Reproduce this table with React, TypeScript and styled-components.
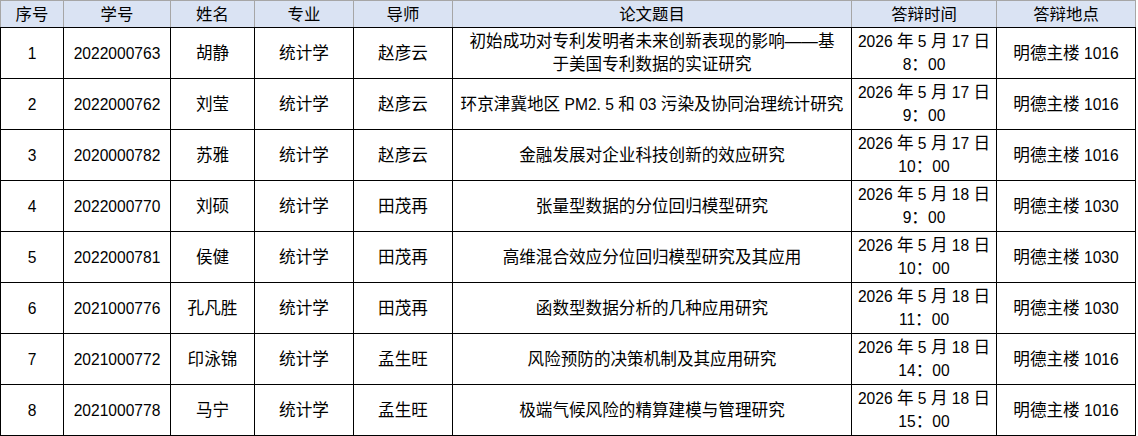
import React from 'react';
import styled, { createGlobalStyle } from 'styled-components';

const GlobalStyle = createGlobalStyle`
  html, body {
    margin: 0;
    padding: 0;
    background: #fff;
  }
  body {
    font-family: "Liberation Sans", "Noto Sans CJK SC", sans-serif;
  }
`;

type Row = {
  id: number;
  studentNo: string;
  name: string;
  major: string;
  tutor: string;
  title: string;
  date: string;
  time: string;
  place: string;
};

const rows: Row[] = [
  {
    id: 1,
    studentNo: '2022000763',
    name: '胡静',
    major: '统计学',
    tutor: '赵彦云',
    title: '初始成功对专利发明者未来创新表现的影响——基\n于美国专利数据的实证研究',
    date: '2026 年 5 月 17 日',
    time: '8：00',
    place: '明德主楼 1016',
  },
  {
    id: 2,
    studentNo: '2022000762',
    name: '刘莹',
    major: '统计学',
    tutor: '赵彦云',
    title: '环京津冀地区 PM2. 5 和 03 污染及协同治理统计研究',
    date: '2026 年 5 月 17 日',
    time: '9：00',
    place: '明德主楼 1016',
  },
  {
    id: 3,
    studentNo: '2020000782',
    name: '苏雅',
    major: '统计学',
    tutor: '赵彦云',
    title: '金融发展对企业科技创新的效应研究',
    date: '2026 年 5 月 17 日',
    time: '10：00',
    place: '明德主楼 1016',
  },
  {
    id: 4,
    studentNo: '2022000770',
    name: '刘硕',
    major: '统计学',
    tutor: '田茂再',
    title: '张量型数据的分位回归模型研究',
    date: '2026 年 5 月 18 日',
    time: '9：00',
    place: '明德主楼 1030',
  },
  {
    id: 5,
    studentNo: '2022000781',
    name: '侯健',
    major: '统计学',
    tutor: '田茂再',
    title: '高维混合效应分位回归模型研究及其应用',
    date: '2026 年 5 月 18 日',
    time: '10：00',
    place: '明德主楼 1030',
  },
  {
    id: 6,
    studentNo: '2021000776',
    name: '孔凡胜',
    major: '统计学',
    tutor: '田茂再',
    title: '函数型数据分析的几种应用研究',
    date: '2026 年 5 月 18 日',
    time: '11：00',
    place: '明德主楼 1030',
  },
  {
    id: 7,
    studentNo: '2021000772',
    name: '印泳锦',
    major: '统计学',
    tutor: '孟生旺',
    title: '风险预防的决策机制及其应用研究',
    date: '2026 年 5 月 18 日',
    time: '14：00',
    place: '明德主楼 1016',
  },
  {
    id: 8,
    studentNo: '2021000778',
    name: '马宁',
    major: '统计学',
    tutor: '孟生旺',
    title: '极端气候风险的精算建模与管理研究',
    date: '2026 年 5 月 18 日',
    time: '15：00',
    place: '明德主楼 1016',
  },
];

const columns = [
  { label: '序号', width: 63 },
  { label: '学号', width: 107 },
  { label: '姓名', width: 84 },
  { label: '专业', width: 99 },
  { label: '导师', width: 99 },
  { label: '论文题目', width: 399 },
  { label: '答辩时间', width: 145 },
  { label: '答辩地点', width: 139 },
];

// latin runs (digits, spaces, PM...) are set a bit smaller than the CJK text
const Mixed: React.FC<{ text: string | number }> = ({ text }) => {
  const lines = String(text).split('\n');
  return (
    <>
      {lines.map((line, li) => (
        <React.Fragment key={li}>
          {li > 0 && <br />}
          {line.split(/([\u0000-\u00ff]+)/).map((part, i) =>
            i % 2 === 1 ? <Latin key={i}>{part}</Latin> : part
          )}
        </React.Fragment>
      ))}
    </>
  );
};

const App: React.FC = () => {
  return (
    <>
      <GlobalStyle />
      <Table>
        <colgroup>
          {columns.map((c) => (
            <col key={c.label} style={{ width: c.width }} />
          ))}
        </colgroup>
        <thead>
          <tr>
            {columns.map((c) => (
              <HeadCell key={c.label}>{c.label}</HeadCell>
            ))}
          </tr>
        </thead>
        <tbody>
          {rows.map((r) => (
            <tr key={r.id}>
              <Cell>
                <Mixed text={r.id} />
              </Cell>
              <Cell>
                <Mixed text={r.studentNo} />
              </Cell>
              <Cell>{r.name}</Cell>
              <Cell>{r.major}</Cell>
              <Cell>{r.tutor}</Cell>
              <Cell>
                <Mixed text={r.title} />
              </Cell>
              <Cell>
                <Mixed text={`${r.date}\n${r.time}`} />
              </Cell>
              <Cell>
                <Mixed text={r.place} />
              </Cell>
            </tr>
          ))}
        </tbody>
      </Table>
    </>
  );
};

const Table = styled.table`
  width: 1136px;
  table-layout: fixed;
  border-collapse: collapse;
  font-size: 16.6px;
  color: #000;
`;

const HeadCell = styled.th`
  height: 26px;
  padding: 0;
  background: #dae3f3;
  border: 1px solid #a6a6a6;
  border-bottom-color: #000;
  font-weight: normal;
  font-size: 16.4px;
  text-align: center;
  vertical-align: middle;
  line-height: 20px;
`;

const Cell = styled.td`
  height: 50px;
  padding: 0 3px;
  border: 1px solid #000;
  text-align: center;
  vertical-align: middle;
  line-height: 23px;
`;

const Latin = styled.span`
  font-size: 15.6px;
`;

export default App;
